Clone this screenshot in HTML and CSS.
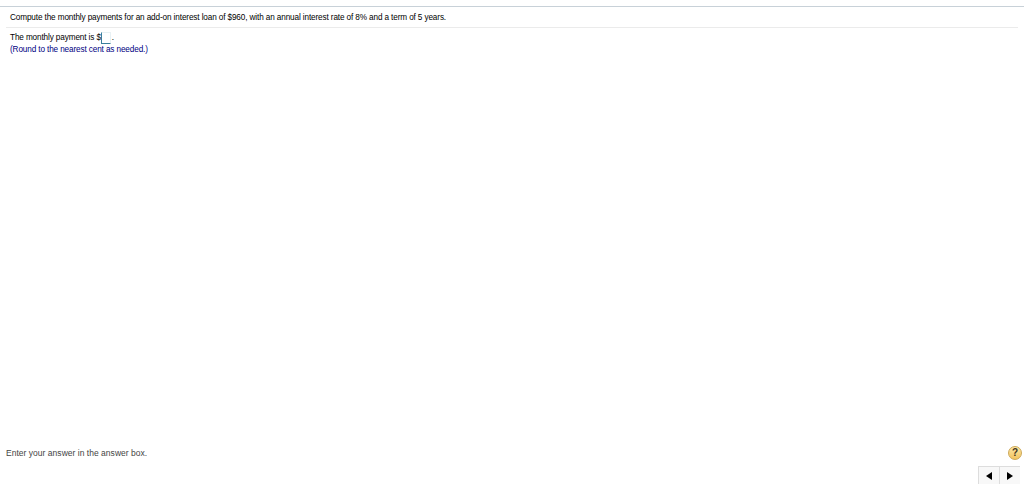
FILE: index.html
```
<!DOCTYPE html>
<html lang="en">
<head>
  <meta charset="utf-8">
  <title>Monthly payment</title>
  <link rel="stylesheet" href="styles.css">
</head>
<body>
  <main class="exercise">
    <p class="question">Compute the monthly payments for an add-on interest loan of $960, with an annual interest rate of 8% and a term of 5 years.</p>
    <div class="work">
      <p class="line">The monthly payment is $<input class="answer" type="text" aria-label="Monthly payment">.</p>
      <p class="hint">(Round to the nearest cent as needed.)</p>
    </div>
  </main>

  <footer class="footer">
    <div class="status">
      <span class="tip">Enter your answer in the answer box.</span>
      <button class="help" type="button">?</button>
    </div>
    <div class="pager">
      <button type="button" aria-label="Previous"><svg width="6" height="8" viewBox="0 0 6 8"><path d="M6 0v8L0 4z"/></svg></button>
      <button type="button" aria-label="Next"><svg width="6" height="8" viewBox="0 0 6 8"><path d="M0 0v8l6-4z"/></svg></button>
    </div>
  </footer>
</body>
</html>
```
FILE: styles.css
```
*{box-sizing:border-box;}
body{
  margin:0;
  height:491px;
  padding-top:6px;
  background:#fff;
  color:#000;
  font-family:"Liberation Sans",Arial,sans-serif;
  font-size:8.2px;
  letter-spacing:-.122px;
  display:flex;
  flex-direction:column;
}
p{margin:0;}
button{padding:0;font-family:inherit;letter-spacing:0;cursor:pointer;}

.exercise{
  flex:1;
  border-top:1px solid #c8d1d8;
  padding:0 6px;
}
.question{
  height:21px;
  line-height:21px;
  padding-left:4px;
  border-bottom:1px solid #ebebeb;
  white-space:nowrap;
}
.work{padding:4px 4px 0;}
.line{
  display:flex;
  height:12px;
  line-height:12px;
}
.answer{
  width:10px;
  height:12px;
  margin:0 1px 0 0;
  padding:0;
  border:1px solid #e8f1f4;
  border-left-color:#3b7f9c;
  border-bottom-color:#3b7f9c;
  font:inherit;
  outline:none;
}
.hint{line-height:12px;color:#00007f;}

/* bottom bar */
.footer{
  height:46px;
  display:flex;
  flex-direction:column;
}
.status{
  height:16px;
  padding:0 2px 0 6px;
  display:flex;
  align-items:center;
  justify-content:space-between;
}
.tip{font-size:8.5px;letter-spacing:.025px;color:#444;}
.help{
  width:14px;
  height:14px;
  border:1px solid #cda857;
  border-radius:50%;
  background:linear-gradient(#fce7a5,#f3c460);
  color:#3d3421;
  font-size:10px;
  font-weight:bold;
  line-height:12px;
}
.pager{
  width:42px;
  height:18px;
  margin:5px 4px 0 auto;
  display:flex;
  border:1px solid #ddd;
  border-width:1px 0 0 1px;
}
.pager button{
  flex:1;
  display:flex;
  align-items:center;
  justify-content:center;
  border:0;
  background:#f8f8f8;
}
.pager button + button{border-left:1px solid #ddd;}
```
